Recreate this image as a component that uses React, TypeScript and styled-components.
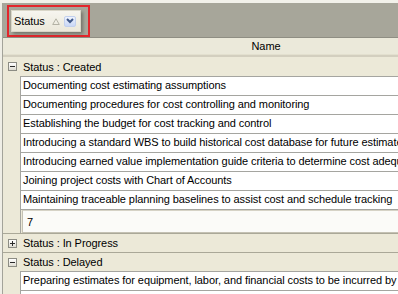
import styled, { createGlobalStyle } from "styled-components";

const GlobalStyle = createGlobalStyle`
  html, body {
    margin: 0;
    padding: 0;
    background: #ece9d8;
  }
  body {
    font-family: "Liberation Sans", Arial, sans-serif;
    font-size: 11px;
    letter-spacing: -0.08px;
    color: #000;
  }
`;

const Frame = styled.div`
  width: 398px;
  height: 294px;
  overflow: hidden;
  box-sizing: border-box;
  border-top: 3px solid #f2f1ea;
  padding-left: 2px;
  background: #efeee6;
`;

const Grid = styled.div`
  height: 100%;
  border-left: 1px solid #a3a39a;
  background: #ece9d8;
  display: flex;
  flex-direction: column;
`;

const GroupPanel = styled.div`
  height: 35px;
  box-sizing: border-box;
  padding: 2px 0 0 4px;
  background: #a7a69a;
  border-bottom: 1px solid #8f8e83;
  flex-shrink: 0;
`;

const Highlight = styled.div`
  display: inline-flex;
  border: 2px solid #e3262c;
  padding: 3px 7px 3px 2px;
`;

const GroupButton = styled.div`
  width: 70px;
  height: 22px;
  box-sizing: border-box;
  display: flex;
  align-items: center;
  padding-left: 2px;
  background: linear-gradient(#f6f5ef, #ebe8da);
  border: 1px solid #d9d6c8;
  box-shadow: 2px 2px 3px rgba(60, 60, 50, 0.45);
`;

const ButtonLabel = styled.span`
  width: 38px;
`;

const SortMark = styled.svg`
  width: 8px;
  height: 7px;
  margin-right: 4px;
`;

const DropBox = styled.div`
  width: 12px;
  height: 11px;
  box-sizing: border-box;
  display: flex;
  align-items: center;
  justify-content: center;
  border: 1px solid #c2d0ee;
  border-radius: 2px;
  background: linear-gradient(#eef3fd, #c9d7f6);
`;

const HeaderRow = styled.div`
  height: 19px;
  box-sizing: border-box;
  display: flex;
  flex-shrink: 0;
  background: #ebe9da;
  border-bottom: 2px solid #d3cfbf;
  box-shadow: inset 0 -1px 0 #e3e0cf;
`;

const HeaderSpacer = styled.div`
  width: 17px;
  flex-shrink: 0;
`;

const HeaderCell = styled.div`
  width: 492px;
  flex-shrink: 0;
  text-align: center;
  line-height: 17px;
`;

const GroupRow = styled.div<{ $first?: boolean }>`
  height: 19px;
  box-sizing: border-box;
  display: flex;
  align-items: center;
  flex-shrink: 0;
  border-top: ${({ $first }) => ($first ? "none" : "1px solid #aaa898")};
  background: #ece9d8;
  white-space: nowrap;
`;

const Expander = styled.div`
  width: 9px;
  height: 9px;
  box-sizing: border-box;
  margin: 0 6px 0 5px;
  border: 1px solid #8c8c84;
  background: linear-gradient(#ffffff, #dedcd2);
  flex-shrink: 0;
`;

const Sign = styled.svg`
  display: block;
  width: 7px;
  height: 7px;
`;

const DataList = styled.div`
  margin-left: 17px;
  width: 493px;
  flex-shrink: 0;
  border-left: 1px solid #a5a5a0;
  border-top: 1px solid #a5a5a0;
`;

const DataRow = styled.div`
  height: 19px;
  box-sizing: border-box;
  border-bottom: 1px solid #a5a5a0;
  background: #fff;
  padding-left: 2px;
  line-height: 17px;
  white-space: nowrap;
  overflow: hidden;
`;

const SummaryRow = styled.div`
  padding: 0 0 0 1px;
  background: #ece9d8;
`;

const SummaryBox = styled.div`
  height: 23px;
  box-sizing: border-box;
  border: 1px solid #c4c1b3;
  border-top-color: #d6d3c6;
  background: #fbfbf8;
  padding-left: 4px;
  line-height: 22px;
`;

type Group = {
  label: string;
  open: boolean;
  items: string[];
  count?: number;
};

const groups: Group[] = [
  {
    label: "Status : Created",
    open: true,
    items: [
      "Documenting cost estimating assumptions",
      "Documenting procedures for cost controlling and monitoring",
      "Establishing the budget for cost tracking and control",
      "Introducing a standard WBS to build historical cost database for future estimates",
      "Introducing earned value implementation guide criteria to determine cost adequacy",
      "Joining project costs with Chart of Accounts",
      "Maintaining traceable planning baselines to assist cost and schedule tracking",
    ],
    count: 7,
  },
  { label: "Status : In Progress", open: false, items: [] },
  {
    label: "Status : Delayed",
    open: true,
    items: [
      "Preparing estimates for equipment, labor, and financial costs to be incurred by the project",
      "Reviewing and approving cost estimates for project phases",
    ],
  },
];

function ExpandSign({ open }: { open: boolean }) {
  return (
    <Sign viewBox="0 0 7 7">
      <rect x="1" y="3" width="5" height="1" fill="#2b2b2b" />
      {!open && <rect x="3" y="1" width="1" height="5" fill="#2b2b2b" />}
    </Sign>
  );
}

export default function App() {
  return (
    <>
      <GlobalStyle />
      <Frame>
        <Grid>
          <GroupPanel>
            <Highlight>
              <GroupButton>
                <ButtonLabel>Status</ButtonLabel>
                <SortMark viewBox="0 0 8 7">
                  <path d="M4 0.8 L7.3 6.5 L0.7 6.5 Z" fill="none" stroke="#b3b1a4" strokeWidth="1" />
                </SortMark>
                <DropBox>
                  <svg width="8" height="6" viewBox="0 0 8 6">
                    <path d="M1 1 L4 4 L7 1" fill="none" stroke="#3f5889" strokeWidth="2" />
                  </svg>
                </DropBox>
              </GroupButton>
            </Highlight>
          </GroupPanel>
          <HeaderRow>
            <HeaderSpacer />
            <HeaderCell>Name</HeaderCell>
          </HeaderRow>
          {groups.map((group, gi) => (
            <div key={group.label}>
              <GroupRow $first={gi === 0}>
                <Expander>
                  <ExpandSign open={group.open} />
                </Expander>
                {group.label}
              </GroupRow>
              {group.open && (
                <DataList>
                  {group.items.map((item) => (
                    <DataRow key={item}>{item}</DataRow>
                  ))}
                  {group.count !== undefined && (
                    <SummaryRow>
                      <SummaryBox>{group.count}</SummaryBox>
                    </SummaryRow>
                  )}
                </DataList>
              )}
            </div>
          ))}
        </Grid>
      </Frame>
    </>
  );
}
